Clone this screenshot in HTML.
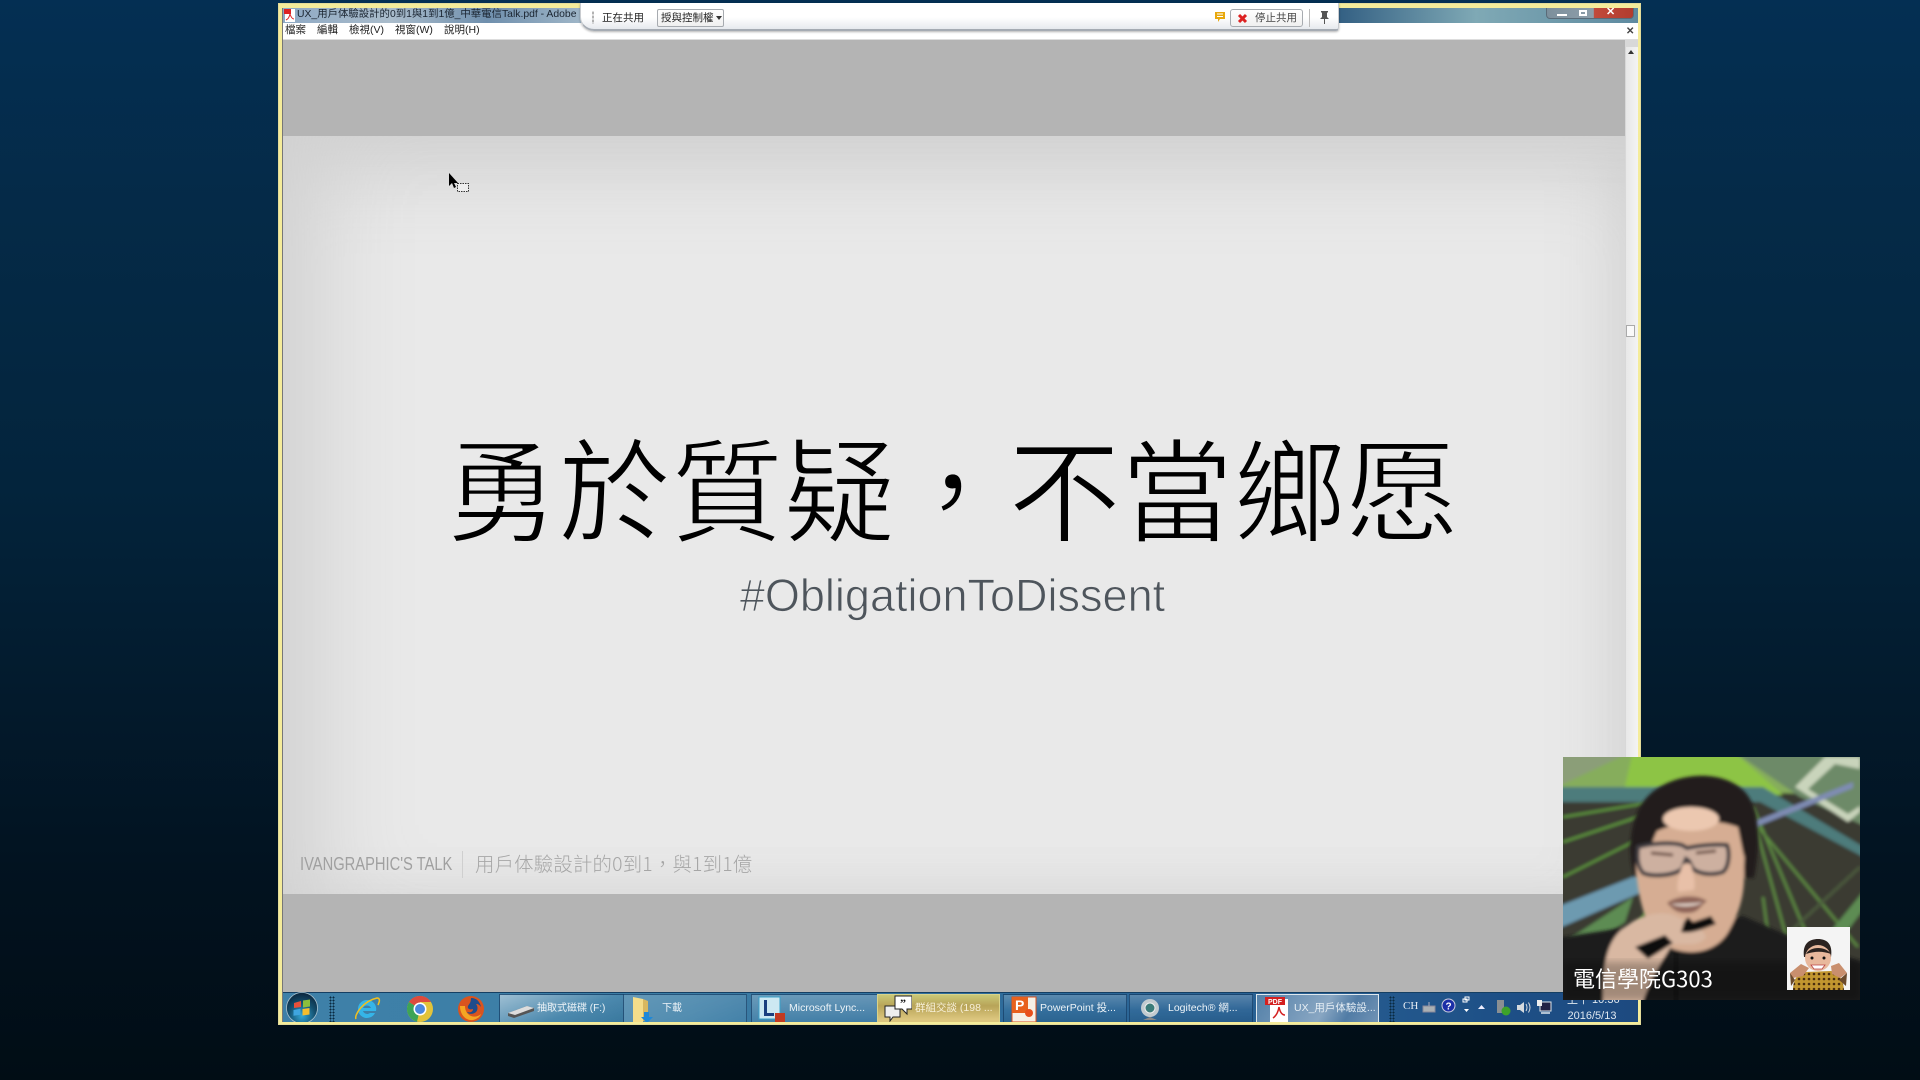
<!DOCTYPE html>
<html lang="zh-Hant"><head><meta charset="utf-8"><title>勇於質疑</title>
<style>
html,body{margin:0;padding:0}
body{width:1920px;height:1080px;overflow:hidden;position:relative;background:linear-gradient(180deg,#042f53 0,#052a47 20%,#03243c 45%,#031a2c 65%,#02121f 82%,#010d15 100%);font-family:"Liberation Sans","Noto Sans CJK TC",sans-serif}
div,span,svg{position:absolute;box-sizing:border-box}
span{white-space:nowrap}
#win{left:278px;top:3px;width:1363px;height:1022px;background:#f5ec9a;border:1px solid #e4dc9a}
#inner{left:3px;top:4px;width:1356px;height:1014px;background:#b4b4b4;overflow:hidden;border-left:1px solid #777}
#title{left:0;top:0;width:1356px;height:15px;background:linear-gradient(90deg,#8ea9c4 0,#aabccb 8%,#6f8fad 15%,#9fb6c8 22%,#6f90ae 30%,#32597f 60%,#1e4b75 75%,#7fa9b5 88%,#5e8aa0 100%);}
#menu{left:0;top:15px;width:1356px;height:17px;background:#fff;border-bottom:1px solid #ddd}
#menu span{top:1px;font-size:10.500px;color:#222;line-height:13px}
#tb{left:580px;top:3px;width:759px;height:28px;background:linear-gradient(#fff 55%,#e6e9ee);border-bottom:2px solid #a5abb3;border-left:1px solid #c9ccd0;border-right:1px solid #c9ccd0;border-radius:0 0 3px 14px;box-shadow:0 1px 2px rgba(0,0,0,.3)}
.btn{border:1px solid #a7abb0;border-radius:3px;background:linear-gradient(#fff,#f0f0f0);height:18px;top:6px}
#slide{left:0;top:128px;width:1342px;height:758px;background:#e9e9e9;box-shadow:inset 85px 0 95px -45px #d2d2d2,inset 0 75px 85px -40px #d0d0d0,inset -50px 0 70px -35px #d6d6d6,inset 0 -30px 50px -30px #dadada}
#sb{left:1342px;top:32px;width:14px;height:952px;background:linear-gradient(90deg,#e8e8e8,#f4f4f4);border-left:1px solid #d8d8d8}
#h1{left:-2px;width:1342px;text-align:center;top:284px;font-family:"Noto Sans CJK TC","Liberation Sans",sans-serif;font-size:112.500px;line-height:130px;color:#000;font-weight:400;-webkit-text-stroke:2px #e9e9e9}
#task{left:0;top:984px;width:1356px;height:30px;background:linear-gradient(90deg,#3e80a8 0,#3c7ea6 30%,#2e6b9a 55%,#285f92 75%,#1d4f86 90%,#1d4a80 100%);border-top:1px solid #153f63}
.t{top:1px;height:29px;background:linear-gradient(180deg,rgba(255,255,255,.22),rgba(255,255,255,.03) 55%,rgba(0,0,0,.06));border:1px solid rgba(20,60,100,.7);color:#eef4f8;font-size:10.500px;line-height:27px}
.t span{top:0}
</style></head><body>
<div id="win"><div id="inner">
 <div id="title">
  <svg style="left:1px;top:1px" width="12" height="13"><rect x="1" y="0" width="10" height="13" fill="#fff"/><rect x="0" y="0" width="7" height="5" fill="#d22"/><path d="M6 5c-1 4-2 5-4 6M6 5c1 3 2 5 4 5" stroke="#d22" fill="none"/></svg>
  <span style="left:14px;top:0;font-size:10.400px;line-height:13px;color:#1a2430">UX_用戶体驗設計的0到1與1到1億_中華電信Talk.pdf - Adobe</span>
  <div style="left:1263px;top:0;width:88px;height:11px;border:1px solid #5a6b78;border-top:none;border-radius:0 0 4px 4px;background:linear-gradient(90deg,#7c8f9c 0,#8e9faa 54%,#c24a3a 55%,#b23c2e 100%)"></div>
  <div style="left:1274px;top:6px;width:10px;height:2px;background:#fff"></div>
  <div style="left:1296px;top:2px;width:8px;height:6px;border:2px solid #fff"></div>
  <span style="left:1323px;top:-2px;font-size:11px;line-height:12px;color:#fff;font-weight:bold">✕</span>
 </div>
 <div id="menu">
  <span style="left:2px">檔案</span><span style="left:34px">編輯</span><span style="left:66px">檢視(V)</span><span style="left:112px">視窗(W)</span><span style="left:161px">說明(H)</span>
  <span style="left:1343px;top:2px;font-size:10px;color:#444;font-weight:bold">✕</span>
 </div>
 <div id="slide">
  <span id="h1">勇於質疑，不當鄉愿</span>
  <div style="left:0;top:432px;width:1339px;text-align:center;font-family:'Liberation Sans',sans-serif;font-size:45px;line-height:56px;color:#4e555c;-webkit-text-stroke:.8px #e9e9e9">#ObligationToDissent</div>
  <span style="left:17px;top:716px;font-family:'Liberation Sans',sans-serif;font-size:18px;line-height:24px;color:#a0a0a0;transform-origin:0 0;transform:scaleX(.817)">IVANGRAPHIC'S TALK</span>
  <div style="left:179px;top:715px;width:1px;height:27px;background:#cfcfcf"></div>
  <span style="left:192px;top:715px;font-family:'Noto Sans CJK TC',sans-serif;font-size:19.400px;line-height:24px;color:#a6a6a6;font-weight:300;letter-spacing:.2px">用戶体驗設計的0到1，與1到1億</span>
  <svg style="left:165px;top:36px" width="24" height="24"><path d="M1 1v13l3-3 2 5 2-1-2-4h4z" fill="#000"/><rect x="9.500" y="11.500" width="11" height="8" fill="#eee" stroke="#333" stroke-dasharray="1.500 1"/></svg>
 </div>
 <div id="sb">
  <div style="left:0;top:0;width:14px;height:7px;background:#d8d8d8"></div>
  <svg style="left:1px;top:9px" width="8" height="6"><path d="M4 1l3 4H1z" fill="#333"/></svg>
  <div style="left:0;top:285px;width:9px;height:12px;background:#fafafa;border:1px solid #aaa"></div>
 </div>
 <div id="task">
  <svg style="left:2px;top:-2px" width="34" height="33"><defs><radialGradient id="o" cx=".5" cy=".75" r=".7"><stop offset="0" stop-color="#33a8d8"/><stop offset=".6" stop-color="#14506f"/><stop offset="1" stop-color="#0c2b44"/></radialGradient></defs><circle cx="17" cy="17" r="15.500" fill="url(#o)" stroke="#a9c2cf" stroke-width=".8"/><path d="M9 12l7-2v6l-7 1z" fill="#e8503a"/><path d="M18 9.500l7-1v7l-7 1z" fill="#8bbe3c"/><path d="M8.500 19l7-1.200v6l-7 1z" fill="#3fa5e0"/><path d="M17.500 18l7-1v6.500l-7 1z" fill="#f6bd2c"/></svg>
  <div style="left:46px;top:3px;width:6px;height:26px;background:radial-gradient(#0a2a40 45%,transparent 50%) 0 0/3px 3px"></div>
  <svg style="left:70px;top:2px" width="28" height="28"><path d="M14 5a9 9 0 1 0 8 13h-5a4.500 4.500 0 0 1-7-2h13a9 9 0 0 0-9-11zm-4 8a4.500 4.500 0 0 1 8 0z" fill="#35b5e8"/><path d="M3 24C1 20 10 6 24 3c3 0 3 3 1 7" fill="none" stroke="#f0c020" stroke-width="1.500"/></svg>
  <svg style="left:123px;top:2px" width="28" height="28"><circle cx="14" cy="14" r="13" fill="#e2c33a"/><path d="M14 14L3 7a13 13 0 0 1 22 0H14z" fill="#dd4b3e"/><path d="M14 14l-11-7a13 13 0 0 0 8 19.600z" fill="#3da457"/><circle cx="14" cy="14" r="6.500" fill="#fff"/><circle cx="14" cy="14" r="5" fill="#4a88e0"/></svg>
  <svg style="left:174px;top:2px" width="28" height="28"><circle cx="14" cy="14" r="13" fill="#d9541f"/><path d="M14 3c6 0 9 4 10 9-2-3-4-3-5-3 2 2 2 6 0 8s-7 3-9 0c3 1 6 0 6-3-3 1-6 0-5-3 1-2 3-3 3-8z" fill="#1d4c8c"/><path d="M3 11c0 9 6 15 13 14 4-1 7-3 8-6-3 3-9 4-13 0-2-2-3-5-3-8z" fill="#f5a623"/></svg>
  <div class="t" style="left:216px;width:125px;border-right:none;background:linear-gradient(160deg,rgba(255,255,255,.5),rgba(255,255,255,.08) 60%,rgba(0,0,0,.05))">
   <svg style="left:7px;top:8px" width="28" height="16"><path d="M1 10L20 3l7 2v3L7 15l-6-2z" fill="#555"/><path d="M1 10L20 3l7 2L8 12z" fill="#ddd"/></svg>
   <span style="left:37px;font-size:10px">抽取式磁碟 (F:)</span>
  </div>
  <div class="t" style="left:340px;width:124px;background:linear-gradient(160deg,rgba(255,255,255,.2),rgba(255,255,255,.12) 60%,rgba(255,255,255,.05))">
   <svg style="left:7px;top:1px" width="26" height="28"><path d="M2 1l10 2v24L2 26z" fill="#f4dd8a"/><path d="M12 3l5 2v20h-5z" fill="#d8b860"/><path d="M13 16h5v5h4l-6 6-6-6h3z" fill="#1e88d8"/></svg>
   <span style="left:38px;font-size:10px">下載</span>
  </div>
  <div class="t" style="left:468px;width:126px;border-right:none;background:linear-gradient(180deg,rgba(255,255,255,.25),rgba(255,255,255,.06))">
   <svg style="left:6px;top:1px" width="28" height="28"><rect x="1" y="1" width="21" height="22" fill="#cde8f2" stroke="#3aa0c8"/><path d="M6 4h3v13h7v3H6z" fill="#1b3f7f"/><rect x="17" y="17" width="10" height="10" fill="#c23a22"/></svg>
   <span style="left:37px;font-size:10.500px">Microsoft Lync...</span>
  </div>
  <div class="t" style="left:594px;width:123px;background:linear-gradient(180deg,#c9c877,#b8a458 40%,#dcc67e 90%);color:#f7f0d8;border-color:#d9d38a">
   <svg style="left:6px;top:0" width="28" height="28"><path d="M1 11h15v11H9l-3 4v-4H1z" fill="#eee" stroke="#222"/><path d="M11 1h17v13h-5v5l-5-5h-7z" fill="#fff" stroke="#222"/><text x="16" y="12" font-size="12" font-family="Liberation Serif" font-weight="bold" fill="#111">”</text></svg>
   <span style="left:37px;font-size:10.500px">群組交談 (198 ...</span>
  </div>
  <div class="t" style="left:720px;width:124px"><svg style="left:7px;top:1px" width="26" height="27"><rect x="1" y="1" width="24" height="25" fill="#f6f0e6" stroke="#d8501c"/><rect x="1" y="1" width="16" height="16" fill="#e8611e"/><text x="4" y="14" font-size="14" font-weight="bold" fill="#fff" font-family="Liberation Sans">P</text><circle cx="18" cy="17" r="4" fill="#e8501c"/></svg><span style="left:36px">PowerPoint 投...</span></div>
  <div class="t" style="left:846px;width:124px"><svg style="left:8px;top:3px" width="24" height="24"><ellipse cx="12" cy="10" rx="9" ry="9" fill="#c2cbd0"/><circle cx="12" cy="10" r="5" fill="#3b7c7a" stroke="#eee"/><path d="M5 22l7-3 7 3z" fill="#888"/></svg><span style="left:38px">Logitech® 網...</span></div>
  <div class="t" style="left:973px;width:123px;background:linear-gradient(120deg,rgba(255,255,255,.2),rgba(255,255,255,.45) 55%,rgba(255,255,255,.2) 75%,rgba(255,255,255,.35));border:1px solid #dfe8ee"><svg style="left:6px;top:1px" width="26" height="28"><rect x="7" y="3" width="18" height="25" fill="#fff"/><rect x="2" y="1" width="20" height="8" fill="#d42020"/><text x="5" y="8" font-size="7" font-weight="bold" fill="#fff" font-family="Liberation Sans">PDF</text><path d="M16 11c-1 6-3 9-6 11M16 11c1 5 3 8 6 8" stroke="#d42020" fill="none" stroke-width="1.500"/></svg><span style="left:37px;font-size:10.500px;color:#e6eef4">UX_用戶体驗設...</span></div>
  <div style="left:1106px;top:3px;width:6px;height:26px;background:radial-gradient(#0a2a40 45%,transparent 50%) 0 0/3px 3px"></div>
  <span style="left:1120px;top:6px;font-family:'Liberation Serif',serif;font-size:11px;line-height:14px;color:#e8eef4">CH</span>
  <svg style="left:1139px;top:7px" width="14" height="14"><path d="M1 6h12v6H1z" fill="#aab0b4" stroke="#889"/><path d="M7 6V2" stroke="#aab"/></svg>
  <svg style="left:1158px;top:5px" width="15" height="15"><circle cx="7.500" cy="7.500" r="6.500" fill="#1b2fa8" stroke="#ccd"/><text x="4.500" y="11.500" font-size="10" font-weight="bold" fill="#fff" font-family="Liberation Sans">?</text></svg>
  <svg style="left:1178px;top:3px" width="10" height="22"><rect x="2" y="3" width="4" height="3" fill="none" stroke="#fff"/><rect x="4" y="1" width="4" height="3" fill="none" stroke="#fff"/><path d="M3 13h5l-2.500 3z" fill="#fff"/></svg>
  <svg style="left:1194px;top:11px" width="9" height="6"><path d="M4.500 1L8 5H1z" fill="#eef"/></svg>
  <svg style="left:1212px;top:6px" width="17" height="18"><rect x="2" y="1" width="7" height="13" fill="#8a8f92"/><circle cx="11" cy="12" r="4.500" fill="#3da32a"/></svg>
  <svg style="left:1233px;top:7px" width="16" height="15"><path d="M1 5h3l4-3v11l-4-3H1z" fill="#d5dade"/><path d="M10 4q2 3.500 0 7M12.500 2.500q3 5 0 10" stroke="#d5dade" fill="none"/></svg>
  <svg style="left:1253px;top:6px" width="16" height="17"><rect x="4" y="3" width="11" height="9" fill="#224" stroke="#dfe6ec"/><rect x="1" y="1" width="5" height="6" fill="#eee"/><path d="M5 14h9" stroke="#dfe6ec" stroke-width="1.500"/></svg>
  <span style="left:1284px;top:1px;font-size:11px;line-height:13px;color:#dfe8f0;width:50px;text-align:center">上午 10:36</span>
  <span style="left:1284px;top:17px;font-size:11px;line-height:13px;color:#dfe8f0;width:50px;text-align:center">2016/5/13</span>
 </div>
</div></div>

<div id="tb">
 <div style="left:11px;top:8px;width:2px;height:13px;background:radial-gradient(#777 50%,transparent 55%) 0 0/2px 4px"></div>
 <span style="left:21px;top:8px;font-size:10.500px;line-height:14px;color:#222">正在共用</span>
 <div class="btn" style="left:76px;width:67px;border-radius:2px"><span style="left:3px;top:1px;font-size:10.500px;line-height:14px;color:#222">授與控制權</span><svg style="left:58px;top:6px" width="6" height="4"><path d="M0 0h6L3 4z" fill="#333"/></svg></div>
 <svg style="left:633px;top:8px" width="12" height="12"><path d="M1 1h10v7H6l-2 3V8H1z" fill="#e8a80c"/><path d="M3 3h6M3 5.500h6" stroke="#fff"/></svg>
 <div class="btn" style="left:649px;width:73px"><svg style="left:6px;top:3px" width="11" height="11"><path d="M2 2l7 7M9 2l-7 7" stroke="#d22" stroke-width="3"/></svg><span style="left:24px;top:1px;font-size:10.500px;line-height:14px;color:#444">停止共用</span></div>
 <div style="left:728px;top:6px;width:1px;height:18px;background:#bbb"></div>
 <svg style="left:738px;top:7px" width="11" height="14"><path d="M2 1h7v1L8 3v4l2 2H1l2-2V3L2 2zM5 9h1v5H5z" fill="#555"/></svg>
</div>

<div style="left:1563px;top:757px;width:297px;height:243px;overflow:hidden;background:#33362f">
<svg style="left:0;top:0" width="297" height="243" viewBox="0 0 297 243">
 <defs><filter id="b1" x="-5%" y="-5%" width="110%" height="110%"><feGaussianBlur stdDeviation="1.500"/></filter><filter id="b2"><feGaussianBlur stdDeviation="4"/></filter></defs>
 <g filter="url(#b1)">
  <rect x="-6" y="-6" width="310" height="256" fill="#3a3a32"/>
  <path d="M-6-6h310v46L200 35H-6z" fill="#86ad5c"/>
  <path d="M-6-6h76L-6 30z" fill="#8b9e78"/>
  <path d="M70-6h100l50 44H60z" fill="#8dc445"/>
  <path d="M170-6h134v76l-67-30z" fill="#6d8a68"/>
  <path d="M-6 30h206l104 62v10L197 45H-6z" fill="#4d7c7c"/>
  <path d="M232 30l30-30h35v12l-25-5-27 25 40 25 12-8v6l-12 10z" fill="#c9d4bb"/>
  <path d="M-6 150l106-42v18L-6 172z" fill="#6d9ab0"/>
  <path d="M0 85l90-30M0 120l100-50M0 60l90-15M20 240l90-120" stroke="#63a13f" stroke-width="2" fill="none"/>
  <path d="M190 50l80 190M190 60l50 180M195 70l100 120M200 140l8 60" stroke="#5e8c43" stroke-width="2.500" fill="none"/>
  <path d="M230 220l74-90v18l-57 75zM-6 190l76-50-8 25-68 45z" fill="#5d8c52"/>
  <path d="M190 65l100-40v6l-100 40z" fill="#7f8cb4"/>
  <path d="M200 200l97-90" stroke="#4b5a3e" stroke-width="3"/>
 </g>
 <g filter="url(#b1)">
  <path d="M-6 250v-69l66-10 60 0 60-12 60 26 61 20v45z" fill="#1a1a1a"/>
  <path d="M165 160l-15 14-32 20-30 49h120l-10-50z" fill="#1c1c1c"/>
  <path d="M72 120c-8-20-6-55 8-75 20-28 74-36 100-12 20 18 16 65 11 88z" fill="#231e1a"/>
  <path d="M73 105c0 30 10 75 32 85 22 10 50 6 62-18 12-22 15-40 14-62 2-25-2-45-18-55-15-6-30-6-45-1-18 4-30 10-33 25-5 6-11 16-12 26z" fill="#d6ad93"/>
  <path d="M84 52c20-20 52-20 84-6l16 24-3 30-6-30c-28-10-58-6-81 4-4 8-7 18-9 26l-6 6-3-24z" fill="#231e1a"/>
  <ellipse cx="128" cy="62" rx="28" ry="12" fill="#ecc8b0"/>
  <path d="M75 90c14-4 34-5 44-2l5 3c14-3 30-4 40-3 3 8 2 22-4 27-9 3-22 3-30-3l-4-8-3-2-4 10c-9 7-30 8-39 4-6-7-6-16-5-26z" fill="#cdb0a0" stroke="#3d3b3f" stroke-width="4"/>
  <path d="M88 96l22 2M133 96l20-2" stroke="#6b4f44" stroke-width="3"/>
  <path d="M115 135c-2-10 2-20 5-28l8 0c2 8 5 18 3 26z" fill="#e8c0a8"/>
  <path d="M104 146c10-8 30-9 40-2-8 6-8 12-20 12-12 0-14-4-20-10z" fill="#8f6559"/>
  <path d="M108 147c8 3 25 3 32-2-6 2-24 2-32 2z" fill="#f1e4da"/>
  <path d="M40 250c0-35 0-67 25-82 15-12 38-15 50-8 12 6 25 10 28 20-8 12-25 5-35 8-2 8-18 25-30 62z" fill="#d9b8a2"/>
  <path d="M72 190l30-12 8 8-25 16z" fill="#111"/>
  <path d="M118 175c8 2 20-2 35-8l-5-8-18 6-5-5-4 5z" fill="#111"/>
  <path d="M113 195v50" stroke="#111" stroke-width="3"/>
 </g>
 <rect x="0" y="205" width="297" height="38" fill="#000" opacity=".25" filter="url(#b2)"/>
</svg>
<span style="left:10px;top:207px;font-family:'Noto Sans CJK TC',sans-serif;font-size:22px;line-height:28px;color:#fff">電信學院G303</span>
<div style="left:224px;top:170px;width:63px;height:63px;background:#f6f6f6;overflow:hidden">
 <svg style="left:0;top:0" width="63" height="63" viewBox="0 0 63 63"><defs><pattern id="lp" width="5" height="5" patternUnits="userSpaceOnUse"><rect width="5" height="5" fill="#c2962f"/><circle cx="2" cy="2" r="1.300" fill="#4a2d0e"/></pattern></defs><rect width="63" height="63" fill="#f4f4f4"/><path d="M17 30c-2-14 6-18 14-18s15 4 13 18z" fill="#2b2320"/><circle cx="31" cy="31" r="13" fill="#e8b89c"/><path d="M19 27c4-8 20-8 25 0-8-3-16-3-25 0z" fill="#2b2320"/><circle cx="25" cy="31" r="1.500" fill="#111"/><circle cx="37" cy="31" r="1.500" fill="#111"/><path d="M24 38h14l-3 4h-8z" fill="#fff" stroke="#b44" stroke-width=".8"/><path d="M6 63c0-10 4-16 12-18l26-1c8 2 12 8 13 19z" fill="url(#lp)"/><path d="M3 46l11-9 8 4-6 8-10 2zM60 46l-8-10-8 3 1 8 8 4z" fill="#c98f6e"/><path d="M3 46l5 7-4 6zM60 46l-8 7 7 6z" fill="#6b4a2c"/></svg>
</div>
</div>
</body></html>
